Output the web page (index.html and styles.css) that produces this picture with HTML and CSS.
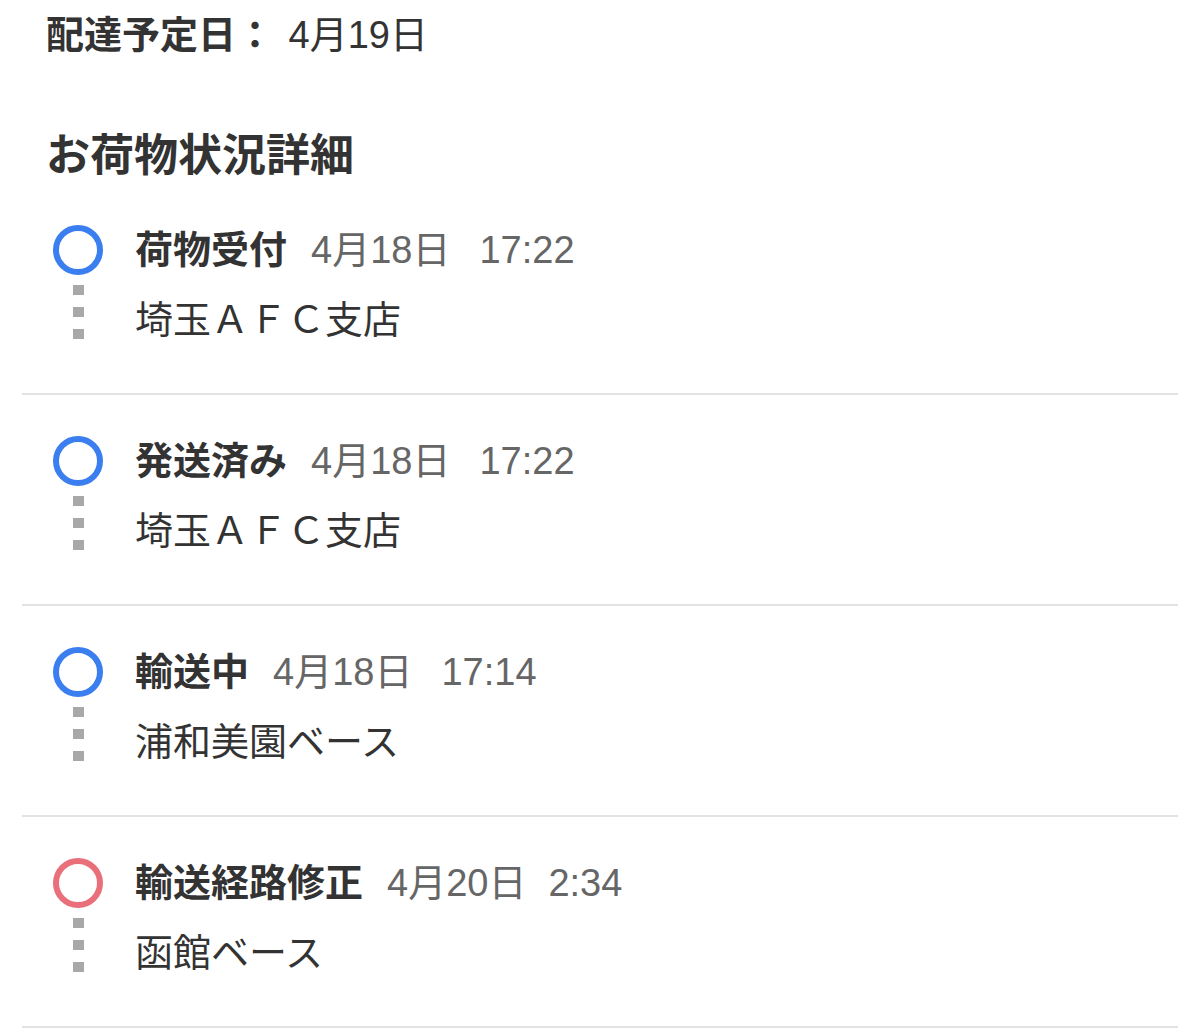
FILE: index.html
```html
<!DOCTYPE html>
<html>
<head>
    <meta charset="utf-8">
    <title>お荷物状況詳細</title>
    <link rel="stylesheet" href="styles.css">
</head>
<body>
    <div class="delivery">
        <span class="label">配達予定日：</span> <span class="value">4月19日</span>
    </div>

    <h2 class="heading">お荷物状況詳細</h2>

    <ul class="timeline">
        <li class="step">
            <div class="marker">
                <span class="ring"></span>
                <span class="dot"></span><span class="dot"></span><span class="dot"></span>
            </div>
            <div class="info">
                <div class="title-line"><b>荷物受付</b><span class="date">4月18日</span><span class="time">17:22</span></div>
                <div class="place">埼玉ＡＦＣ支店</div>
            </div>
        </li>
        <li class="step">
            <div class="marker">
                <span class="ring"></span>
                <span class="dot"></span><span class="dot"></span><span class="dot"></span>
            </div>
            <div class="info">
                <div class="title-line"><b>発送済み</b><span class="date">4月18日</span><span class="time">17:22</span></div>
                <div class="place">埼玉ＡＦＣ支店</div>
            </div>
        </li>
        <li class="step">
            <div class="marker">
                <span class="ring"></span>
                <span class="dot"></span><span class="dot"></span><span class="dot"></span>
            </div>
            <div class="info">
                <div class="title-line"><b>輸送中</b><span class="date">4月18日</span><span class="time">17:14</span></div>
                <div class="place">浦和美園ベース</div>
            </div>
        </li>
        <li class="step warn">
            <div class="marker">
                <span class="ring"></span>
                <span class="dot"></span><span class="dot"></span><span class="dot"></span>
            </div>
            <div class="info">
                <div class="title-line"><b>輸送経路修正</b><span class="date">4月20日</span><span class="time short">2:34</span></div>
                <div class="place">函館ベース</div>
            </div>
        </li>
    </ul>
</body>
</html>
```

FILE: styles.css
```css
body {
    margin: 0;
    background-color: #ffffff;
    color: #333;
    font-family: "Liberation Sans", "Noto Sans CJK JP", sans-serif;
}

.delivery {
    margin: 10px 0 0 46px;
    font-size: 38px;
    line-height: 50px;
    height: 50px;
}

.delivery .label {
    font-weight: bold;
}

.delivery .value {
    margin-left: 4px;
}

.heading {
    margin: 68px 0 0 46px;
    font-size: 44px;
    line-height: 56px;
    height: 56px;
    font-weight: bold;
}

.timeline {
    list-style: none;
    margin: 0 22px;
    padding: 0;
}

.step {
    display: flex;
    gap: 32px;
    height: 168px;
    padding: 41px 0 0 31px;
    border-bottom: 2px solid #e3e3e3;
}

.marker {
    width: 50px;
    display: flex;
    flex-direction: column;
    align-items: center;
}

.ring {
    width: 50px;
    height: 50px;
    box-sizing: border-box;
    border: 6px solid #3b7ef0;
    border-radius: 50%;
    margin-bottom: 10px;
}

.warn .ring {
    border-color: #e9707a;
}

.dot {
    width: 11px;
    height: 10px;
    background-color: #a8a8a8;
    margin-bottom: 12px;
}

.info {
    font-size: 38px;
}

.title-line {
    height: 50px;
    line-height: 50px;
    white-space: nowrap;
}

.title-line b {
    color: #333;
}

.date {
    color: #666;
    margin-left: 24px;
}

.time {
    color: #666;
    margin-left: 29px;
}

.time.short {
    margin-left: 22px;
}

.place {
    margin-top: 20px;
    height: 50px;
    line-height: 50px;
    color: #333;
}
```
